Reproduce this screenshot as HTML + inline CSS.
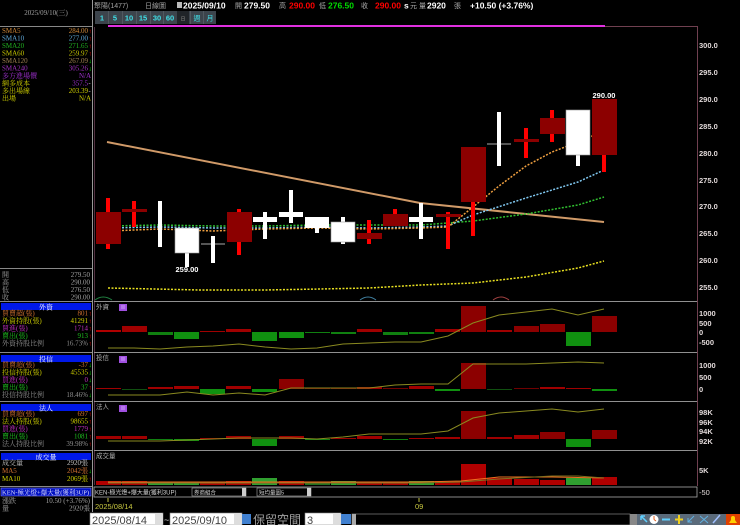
<!DOCTYPE html>
<html><head><meta charset="utf-8"><style>
html,body{margin:0;padding:0;background:#000;width:740px;height:525px;overflow:hidden}
svg{display:block}
text{font-family:"Liberation Sans","Noto Sans CJK TC",sans-serif}
.lp text{font-family:"Liberation Serif","Noto Serif CJK SC",serif}
</style></head><body>
<svg width="740" height="525" viewBox="0 0 740 525" xmlns="http://www.w3.org/2000/svg">
<rect width="740" height="525" fill="#000"/>
<!-- LEFT PANEL -->
<g font-size="7" class="lp">
<text x="46" y="15" fill="#a0a0a0" text-anchor="middle">2025/09/10(三)</text>
<line x1="0" y1="26.5" x2="92" y2="26.5" stroke="#888"/>
<g text-anchor="start">
<text x="2" y="33" fill="#d08838">SMA5</text>
<text x="2" y="40.5" fill="#60a8d8">SMA10</text>
<text x="2" y="48" fill="#20b020">SMA20</text>
<text x="2" y="55.5" fill="#c8c800">SMA60</text>
<text x="2" y="63" fill="#a08050">SMA120</text>
<text x="2" y="70.5" fill="#a030c0">SMA240</text>
<text x="2" y="78" fill="#a030d0">多方進場價</text>
<text x="2" y="85.5" fill="#d0d000">網多成本</text>
<text x="2" y="93" fill="#d0d000">多出場線</text>
<text x="2" y="100.5" fill="#d0d000">出場</text>
</g>
<g text-anchor="end">
<text x="88" y="33" fill="#d08838">284.00</text>
<text x="88" y="40.5" fill="#60a8d8">277.00</text>
<text x="88" y="48" fill="#20b020">271.65</text>
<text x="88" y="55.5" fill="#c8c800">259.97</text>
<text x="88" y="63" fill="#a08050">267.09</text>
<text x="88" y="70.5" fill="#a030c0">305.26</text>
<text x="91" y="78" fill="#a030d0">N/A</text>
<text x="88" y="85.5" fill="#a030d0">357.5</text>
<text x="88" y="93" fill="#d0d000">203.39</text>
<text x="91" y="100.5" fill="#d0d000">N/A</text>
</g>
<g font-size="6.5">
<text x="88.5" y="33" fill="#f00">↑</text><text x="88.5" y="40.5" fill="#f00">↑</text><text x="88.5" y="48" fill="#f00">↑</text><text x="88.5" y="55.5" fill="#f00">↑</text><text x="88.5" y="63" fill="#0f0">↓</text><text x="88.5" y="70.5" fill="#0f0">↓</text><text x="88.5" y="85.5" fill="#ddd">-</text><text x="88.5" y="93" fill="#ddd">-</text>
</g>
<line x1="0" y1="268.5" x2="92" y2="268.5" stroke="#888"/>
<text x="2" y="277" fill="#a0a0a0">開</text><text x="90" y="277" fill="#a0a0a0" text-anchor="end">279.50</text>
<text x="2" y="284.5" fill="#a0a0a0">高</text><text x="90" y="284.5" fill="#a0a0a0" text-anchor="end">290.00</text>
<text x="2" y="292" fill="#a0a0a0">低</text><text x="90" y="292" fill="#a0a0a0" text-anchor="end">276.50</text>
<text x="2" y="299.5" fill="#a0a0a0">收</text><text x="90" y="299.5" fill="#a0a0a0" text-anchor="end">290.00</text>
<line x1="0" y1="301.5" x2="92" y2="301.5" stroke="#888"/>
<rect x="1" y="303" width="90" height="7" fill="#0018e8"/>
<text x="46" y="309.5" fill="#fff" text-anchor="middle">外資</text>
<text x="2" y="315.5" fill="#d07030">買賣超(張)</text><text x="88" y="315.5" fill="#d07030" text-anchor="end">801</text>
<text x="2" y="323" fill="#d0d000">外資持股(張)</text><text x="88" y="323" fill="#d0d000" text-anchor="end">41291</text>
<text x="2" y="330.5" fill="#c030c0">買進(張)</text><text x="88" y="330.5" fill="#c030c0" text-anchor="end">1714</text>
<text x="2" y="338" fill="#20c020">賣出(張)</text><text x="88" y="338" fill="#20c020" text-anchor="end">913</text>
<text x="2" y="345.5" fill="#909090">外資持股比例</text><text x="88" y="345.5" fill="#909090" text-anchor="end">16.73%</text>
<g fill="#f00" font-size="6.5"><text x="88.5" y="315.5">↑</text><text x="88.5" y="323">↑</text><text x="88.5" y="330.5">↑</text><text x="88.5" y="338">↑</text><text x="88.5" y="345.5">↑</text></g>
<line x1="0" y1="352.5" x2="92" y2="352.5" stroke="#888"/>
<rect x="1" y="355" width="90" height="7" fill="#0018e8"/>
<text x="46" y="361.5" fill="#fff" text-anchor="middle">投信</text>
<text x="2" y="367" fill="#d07030">買賣超(張)</text><text x="88" y="367" fill="#d07030" text-anchor="end">-37</text>
<text x="2" y="374.5" fill="#d0d000">投信持股(張)</text><text x="88" y="374.5" fill="#d0d000" text-anchor="end">45535</text>
<text x="2" y="382" fill="#c030c0">買進(張)</text><text x="88" y="382" fill="#c030c0" text-anchor="end">0</text>
<text x="2" y="389.5" fill="#20c020">賣出(張)</text><text x="88" y="389.5" fill="#20c020" text-anchor="end">37</text>
<text x="2" y="397" fill="#909090">投信持股比例</text><text x="88" y="397" fill="#909090" text-anchor="end">18.46%</text>
<g font-size="6.5"><text x="88.5" y="367" fill="#0f0">↓</text><text x="88.5" y="374.5" fill="#0f0">↓</text><text x="88.5" y="382" fill="#0f0">↓</text><text x="88.5" y="389.5" fill="#f00">↑</text><text x="88.5" y="397" fill="#0f0">↓</text></g>
<line x1="0" y1="401.5" x2="92" y2="401.5" stroke="#888"/>
<rect x="1" y="404" width="90" height="7" fill="#0018e8"/>
<text x="46" y="410.5" fill="#fff" text-anchor="middle">法人</text>
<text x="2" y="416" fill="#d07030">買賣超(張)</text><text x="88" y="416" fill="#d07030" text-anchor="end">697</text>
<text x="2" y="423.5" fill="#d0d000">法人持股(張)</text><text x="88" y="423.5" fill="#d0d000" text-anchor="end">98655</text>
<text x="2" y="431" fill="#c030c0">買進(張)</text><text x="88" y="431" fill="#c030c0" text-anchor="end">1779</text>
<text x="2" y="438.5" fill="#20c020">賣出(張)</text><text x="88" y="438.5" fill="#20c020" text-anchor="end">1081</text>
<text x="2" y="446" fill="#909090">法人持股比例</text><text x="88" y="446" fill="#909090" text-anchor="end">39.98%</text>
<g fill="#f00" font-size="6.5"><text x="88.5" y="416">↑</text><text x="88.5" y="423.5">↑</text><text x="88.5" y="431">↑</text><text x="88.5" y="438.5">↑</text><text x="88.5" y="446">↑</text></g>
<line x1="0" y1="450.5" x2="92" y2="450.5" stroke="#888"/>
<rect x="1" y="453" width="90" height="7" fill="#0018e8"/>
<text x="46" y="459.5" fill="#fff" text-anchor="middle">成交量</text>
<text x="2" y="465" fill="#c0c0c0">成交量</text><text x="88" y="465" fill="#c0c0c0" text-anchor="end">2920張</text>
<text x="2" y="473" fill="#d07030">MA5</text><text x="88" y="473" fill="#d07030" text-anchor="end">2042張</text>
<text x="2" y="481" fill="#d0d000">MA10</text><text x="88" y="481" fill="#d0d000" text-anchor="end">2069張</text>
<g font-size="6.5"><text x="88.5" y="473" fill="#0f0">↓</text><text x="88.5" y="481" fill="#f00">↑</text></g>
<line x1="0" y1="486.5" x2="92" y2="486.5" stroke="#888"/>
<rect x="1" y="488" width="90" height="8" fill="#0010c0" stroke="#8080ff" stroke-width="0.6"/>
<text x="2" y="494.5" fill="#e0e0ff" font-size="6.5">KEN-極光燈+爆大量(獲利3UP)</text>
<text x="2" y="503" fill="#a0a0a0">漲跌</text><text x="90" y="503" fill="#a0a0a0" text-anchor="end">10.50 (+3.76%)</text>
<text x="2" y="510.5" fill="#a0a0a0">量</text><text x="90" y="510.5" fill="#a0a0a0" text-anchor="end">2920張</text>
</g>
<line x1="92.5" y1="0" x2="92.5" y2="512" stroke="#999"/>

<!-- TOP BAR -->
<g font-size="8.5">
<text x="94" y="8" fill="#a0a0a0" font-size="7">聚陽(1477)</text>
<text x="145" y="8" fill="#a0a0a0" font-size="7">日線圖</text>
<rect x="177" y="2" width="5" height="6" fill="#bbb"/>
<text x="183" y="8.5" fill="#fff" font-weight="bold">2025/09/10</text>
<text x="235" y="8" fill="#aaa" font-size="7">開</text>
<text x="244" y="8.5" fill="#fff" font-weight="bold">279.50</text>
<text x="279" y="8" fill="#aaa" font-size="7">高</text>
<text x="289" y="8.5" fill="#f00" font-weight="bold">290.00</text>
<text x="319" y="8" fill="#aaa" font-size="7">低</text>
<text x="328" y="8.5" fill="#0d0" font-weight="bold">276.50</text>
<text x="361" y="8" fill="#aaa" font-size="7">收</text>
<text x="375" y="8.5" fill="#f00" font-weight="bold">290.00</text>
<text x="404" y="8.5" fill="#fff" font-weight="bold">s</text>
<text x="410" y="8" fill="#aaa" font-size="7">元</text>
<text x="419" y="8" fill="#aaa" font-size="7">量</text>
<text x="427" y="8.5" fill="#fff" font-weight="bold">2920</text>
<text x="454" y="8" fill="#aaa" font-size="7">張</text>
<text x="470" y="8.5" fill="#fff" font-weight="bold">+10.50 (+3.76%)</text>
</g>
<g font-size="7.5" font-weight="bold" fill="#40e0e8" text-anchor="middle">
<rect x="95" y="11" width="121" height="13" fill="#3c444c"/>
<rect x="177" y="11" width="12" height="13" fill="#202428"/>
<g stroke="#606870" stroke-width="0.6"><line x1="108.5" y1="11" x2="108.5" y2="24"/><line x1="122.5" y1="11" x2="122.5" y2="24"/><line x1="136.5" y1="11" x2="136.5" y2="24"/><line x1="150.5" y1="11" x2="150.5" y2="24"/><line x1="163.5" y1="11" x2="163.5" y2="24"/><line x1="190.5" y1="11" x2="190.5" y2="24"/><line x1="203.5" y1="11" x2="203.5" y2="24"/></g>
<text x="102" y="20.5">1</text><text x="115" y="20.5">5</text><text x="129" y="20.5">10</text><text x="143" y="20.5">15</text><text x="157" y="20.5">30</text><text x="170" y="20.5">60</text>
<text x="183" y="20.5" fill="#666" font-size="5">日</text><text x="197" y="20.5" font-weight="normal" font-size="7">週</text><text x="210" y="20.5" font-weight="normal" font-size="7">月</text>
</g>
<rect x="108" y="25" width="497" height="2" fill="#e030e0"/>
<line x1="605" y1="26.5" x2="697" y2="26.5" stroke="#704050"/>
<line x1="697.5" y1="26" x2="697.5" y2="301" stroke="#704050"/>
<line x1="94.5" y1="27" x2="94.5" y2="485" stroke="#503040"/>

<g font-size="7.5" fill="#e0d8d8" font-weight="bold">
<text x="699" y="48">300.0</text><text x="699" y="75">295.0</text><text x="699" y="102">290.0</text><text x="699" y="129">285.0</text><text x="699" y="156">280.0</text><text x="699" y="183">275.0</text><text x="699" y="209">270.0</text><text x="699" y="236">265.0</text><text x="699" y="263">260.0</text><text x="699" y="290">255.0</text>
<text x="699" y="316">1000</text><text x="699" y="326">500</text><text x="699" y="335">0</text><text x="699" y="345">-500</text>
<text x="699" y="368">1000</text><text x="699" y="380">500</text><text x="699" y="392">0</text>
<text x="699" y="415">98K</text><text x="699" y="425">96K</text><text x="699" y="434">94K</text><text x="699" y="444">92K</text>
<text x="699" y="473">5K</text>
<text x="699" y="495" font-weight="normal">-50</text>
</g>

<polyline points="107,142 420,203 604,222" fill="none" stroke="#d09a68" stroke-width="2"/>
<g fill="none" stroke-width="1.5" stroke-dasharray="2,1.5">
<polyline stroke="#e8e020" points="108,288 200,290 265,290 320,289 369,288 421,285 473,283 526,277 578,268 604,261"/>
<polyline stroke="#30c030" points="108,226 160,225 213,226 265,226 317,225 369,225 421,225 448,223 473,221 526,214 578,205 604,197"/>
<polyline stroke="#80c8f0" points="108,228 160,227 213,228 265,228 317,227 369,228 421,227 448,226 473,215 526,198 578,182 604,170"/>
<polyline stroke="#f0a040" points="108,231 160,229 213,231 265,229 317,228 369,229 421,228 448,227 473,207 499,186 526,166 552,152 578,142 604,131"/>
</g>

<g>
<g fill="#ff0000">
<rect x="106" y="198" width="4" height="51"/><rect x="132" y="201" width="4" height="26"/><rect x="237" y="209" width="4" height="46"/><rect x="367" y="220" width="4" height="24"/><rect x="393" y="209" width="4" height="17"/><rect x="446" y="212" width="4" height="37"/><rect x="471" y="147" width="4" height="89"/><rect x="524" y="128" width="4" height="30"/><rect x="550" y="110" width="4" height="32"/><rect x="602" y="99" width="4" height="73"/>
</g>
<g fill="#8c0000">
<rect x="96" y="212" width="25" height="32"/><rect x="122" y="209" width="25" height="3"/><rect x="227" y="212" width="25" height="30"/><rect x="357" y="233" width="25" height="6"/><rect x="383" y="214" width="25" height="12"/><rect x="436" y="214" width="25" height="3"/><rect x="461" y="147" width="25" height="55"/><rect x="514" y="139" width="25" height="3"/><rect x="540" y="118" width="25" height="16"/><rect x="592" y="99" width="25" height="56"/>
</g>
<g fill="#ffffff">
<rect x="158" y="201" width="4" height="46"/>
<rect x="185" y="228" width="4" height="39"/><rect x="175" y="228" width="24" height="25" stroke="#999" stroke-width="0.6"/>
<rect x="201" y="243.5" width="24" height="1" fill="#aaa"/><rect x="211" y="236" width="4" height="27"/>
<rect x="263" y="212" width="4" height="27"/><rect x="253" y="217" width="24" height="5"/>
<rect x="289" y="190" width="4" height="33"/><rect x="279" y="212" width="24" height="5"/>
<rect x="315" y="217" width="4" height="16"/><rect x="305" y="217" width="24" height="11"/>
<rect x="341" y="217" width="4" height="27"/><rect x="331" y="222" width="24" height="20" stroke="#999" stroke-width="0.6"/>
<rect x="419" y="203" width="4" height="36"/><rect x="409" y="217" width="24" height="5"/>
<rect x="487" y="143.5" width="24" height="1" fill="#aaa"/><rect x="497" y="112" width="4" height="54"/>
<rect x="576" y="110" width="4" height="56"/><rect x="566" y="110" width="24" height="45" stroke="#999" stroke-width="0.6"/>
</g>
</g>
<g font-size="7.5" fill="#fff" text-anchor="middle" font-weight="bold">
<text x="187" y="272">259.00</text><text x="604" y="98">290.00</text>
</g>
<g fill="none" stroke-width="1"><path d="M95,300 Q103,294 112,300" stroke="#208040"/><path d="M360,300 Q368,294 376,300" stroke="#4080a0"/><path d="M493,300 Q501,294 509,300" stroke="#a04040"/></g>

<g stroke="#909090" stroke-width="1">
<line x1="94" y1="301.5" x2="697" y2="301.5"/><line x1="94" y1="352.5" x2="697" y2="352.5"/><line x1="94" y1="401.5" x2="697" y2="401.5"/><line x1="94" y1="450.5" x2="697" y2="450.5"/>
</g>
<line x1="697.5" y1="301" x2="697.5" y2="486" stroke="#704050"/>
<g font-size="6.5" fill="#b0b0b0">
<text x="96" y="309">外資</text><text x="96" y="360">投信</text><text x="96" y="409">法人</text><text x="96" y="458">成交量</text>
</g>
<g fill="#a050e0"><rect x="119" y="304" width="8" height="7"/><rect x="119" y="356" width="8" height="7"/><rect x="119" y="405" width="8" height="7"/></g>
<g stroke="#e0c0ff" stroke-width="0.7"><line x1="121" y1="306" x2="125" y2="306"/><line x1="121" y1="308" x2="125" y2="308"/><line x1="121" y1="358" x2="125" y2="358"/><line x1="121" y1="360" x2="125" y2="360"/><line x1="121" y1="407" x2="125" y2="407"/><line x1="121" y1="409" x2="125" y2="409"/></g>

<g>
<rect x="96" y="330" width="25" height="2" fill="#b00000"/><rect x="122" y="326" width="25" height="6" fill="#a00000"/><rect x="148" y="332" width="25" height="3" fill="#108010"/><rect x="174" y="332" width="25" height="7" fill="#109010"/><rect x="200" y="331" width="25" height="1" fill="#a00000"/><rect x="226" y="329" width="25" height="3" fill="#a00000"/><rect x="252" y="332" width="25" height="9" fill="#109010"/><rect x="279" y="332" width="25" height="6" fill="#109010"/><rect x="305" y="332" width="25" height="1" fill="#108010"/><rect x="331" y="332" width="25" height="2" fill="#108010"/><rect x="357" y="329" width="25" height="3" fill="#a00000"/><rect x="383" y="332" width="25" height="3" fill="#108010"/><rect x="409" y="332" width="25" height="2" fill="#108010"/><rect x="435" y="329" width="25" height="3" fill="#a00000"/><rect x="461" y="306" width="25" height="26" fill="#8c0000"/><rect x="487" y="330" width="25" height="2" fill="#a00000"/><rect x="514" y="326" width="25" height="6" fill="#8c0000"/><rect x="540" y="324" width="25" height="8" fill="#8c0000"/><rect x="566" y="332" width="25" height="14" fill="#109010"/><rect x="592" y="316" width="25" height="16" fill="#8c0000"/>
</g>
<polyline fill="none" stroke="#8a8a20" stroke-width="1" points="108,348 134,348 160,349 187,347 213,346 239,344 265,347 291,349 317,348 343,344 369,343 395,342 421,342 448,336 473,323 499,315 526,312 552,309 578,315 604,309"/>
<g>
<rect x="96" y="388" width="25" height="1" fill="#a00000"/><rect x="122" y="389" width="25" height="1" fill="#105010"/><rect x="148" y="387" width="25" height="2" fill="#a00000"/><rect x="174" y="386" width="25" height="3" fill="#a00000"/><rect x="200" y="389" width="25" height="5" fill="#109010"/><rect x="226" y="386" width="25" height="3" fill="#a00000"/><rect x="252" y="389" width="25" height="3" fill="#109010"/><rect x="279" y="379" width="25" height="10" fill="#8c0000"/><rect x="305" y="388" width="25" height="1" fill="#700000"/><rect x="331" y="388" width="25" height="1" fill="#700000"/><rect x="357" y="387" width="25" height="2" fill="#a00000"/><rect x="383" y="388" width="25" height="1" fill="#700000"/><rect x="409" y="386" width="25" height="3" fill="#a00000"/><rect x="435" y="389" width="25" height="2" fill="#109010"/><rect x="461" y="363" width="25" height="26" fill="#8c0000"/><rect x="487" y="389" width="25" height="1" fill="#105010"/><rect x="514" y="388" width="25" height="1" fill="#700000"/><rect x="540" y="387" width="25" height="2" fill="#a00000"/><rect x="566" y="388" width="25" height="1" fill="#a00000"/><rect x="592" y="389" width="25" height="2" fill="#109010"/>
</g>
<polyline fill="none" stroke="#8a8a20" stroke-width="1" points="108,395 134,395 160,395 187,392 213,395 239,393 265,395 291,388 317,388 343,388 369,388 395,385 421,384 448,384 473,364 499,364 526,364 552,363 578,362 604,363"/>
<g>
<rect x="96" y="436" width="25" height="3" fill="#a00000"/><rect x="122" y="436" width="25" height="3" fill="#a00000"/><rect x="148" y="439" width="25" height="1" fill="#108010"/><rect x="174" y="439" width="25" height="2" fill="#109010"/><rect x="200" y="438" width="25" height="1" fill="#a00000"/><rect x="226" y="436" width="25" height="3" fill="#a00000"/><rect x="252" y="439" width="25" height="7" fill="#109010"/><rect x="279" y="436" width="25" height="3" fill="#a00000"/><rect x="305" y="439" width="25" height="1" fill="#108010"/><rect x="331" y="438" width="25" height="1" fill="#a00000"/><rect x="357" y="436" width="25" height="3" fill="#a00000"/><rect x="383" y="439" width="25" height="1" fill="#108010"/><rect x="409" y="438" width="25" height="1" fill="#a00000"/><rect x="435" y="437" width="25" height="2" fill="#a00000"/><rect x="461" y="411" width="25" height="28" fill="#8c0000"/><rect x="487" y="437" width="25" height="2" fill="#a00000"/><rect x="514" y="435" width="25" height="4" fill="#a00000"/><rect x="540" y="432" width="25" height="7" fill="#8c0000"/><rect x="566" y="439" width="25" height="8" fill="#109010"/><rect x="592" y="430" width="25" height="9" fill="#8c0000"/>
</g>
<polyline fill="none" stroke="#8a8a20" stroke-width="1" points="108,441 134,441 160,441 187,440 213,439 239,438 265,438 291,438 317,439 343,437 369,434 395,434 421,434 448,431 473,418 499,413 526,411 552,409 578,412 604,409"/>
<g>
<rect x="96" y="481" width="25" height="4" fill="#b00000"/><rect x="122" y="481" width="25" height="4" fill="#b00000"/><rect x="148" y="482" width="25" height="3" fill="#30a030"/><rect x="174" y="482" width="25" height="3" fill="#30a030"/><rect x="200" y="482" width="25" height="3" fill="#b00000"/><rect x="226" y="481" width="25" height="4" fill="#b00000"/><rect x="252" y="478" width="25" height="7" fill="#30a030"/><rect x="279" y="481" width="25" height="4" fill="#b00000"/><rect x="305" y="483" width="25" height="2" fill="#207020"/><rect x="331" y="481" width="25" height="4" fill="#30a030"/><rect x="357" y="482" width="25" height="3" fill="#b00000"/><rect x="383" y="482" width="25" height="3" fill="#b00000"/><rect x="409" y="481" width="25" height="4" fill="#30a030"/><rect x="435" y="481" width="25" height="4" fill="#b00000"/><rect x="461" y="464" width="25" height="21" fill="#b00000"/><rect x="487" y="478" width="25" height="7" fill="#b00000"/><rect x="514" y="479" width="25" height="6" fill="#b00000"/><rect x="540" y="480" width="25" height="5" fill="#b00000"/><rect x="566" y="478" width="25" height="7" fill="#30a030"/><rect x="592" y="477" width="25" height="8" fill="#b00000"/>
</g>
<polyline fill="none" stroke="#f07020" stroke-width="1" points="108,482 265,482 421,482 461,481 499,477 552,477 604,478"/>
<polyline fill="none" stroke="#807020" stroke-width="1" points="108,483 265,483 421,483 461,482 499,479 552,476 578,476 604,478"/>

<rect x="94" y="487" width="603" height="10" fill="#000" stroke="#aaa" stroke-width="0.8"/>
<text x="95" y="494.5" fill="#d0d0d0" font-size="6">KEN-極光燈+爆大量(獲利3UP)</text>
<rect x="192" y="488" width="54" height="8" fill="#000" stroke="#aaa" stroke-width="0.6"/><text x="194" y="494.5" fill="#d0d0d0" font-size="5.5">券商組合</text><rect x="242" y="488" width="4" height="8" fill="#ccc"/>
<rect x="257" y="488" width="54" height="8" fill="#000" stroke="#aaa" stroke-width="0.6"/><text x="259" y="494.5" fill="#d0d0d0" font-size="5.5">短均量圖5</text><rect x="307" y="488" width="4" height="8" fill="#ccc"/>
<line x1="108" y1="498" x2="108" y2="502" stroke="#c0c040"/><line x1="419" y1="498" x2="419" y2="502" stroke="#c0c040"/>
<text x="95" y="509" fill="#c8c840" font-size="7.5">2025/08/14</text>
<text x="415" y="509" fill="#c8c840" font-size="7.5">09</text>

<rect x="90" y="513" width="73" height="12" fill="#fff" stroke="#888" stroke-width="0.6"/>
<text x="92" y="524" fill="#444" font-size="11" font-family="Liberation Serif">2025/08/14</text>
<rect x="155" y="514" width="7" height="10" fill="#ddd"/>
<text x="164" y="523" fill="#ccc" font-size="9">~</text>
<rect x="170" y="513" width="72" height="12" fill="#fff" stroke="#888" stroke-width="0.6"/>
<text x="172" y="524" fill="#444" font-size="11" font-family="Liberation Serif">2025/09/10</text>
<rect x="234" y="514" width="7" height="10" fill="#ddd"/>
<rect x="242" y="514" width="9" height="10" fill="#4080d0"/>
<text x="253" y="524" fill="#a0a0a0" font-size="12">保留空間</text>
<rect x="305" y="513" width="36" height="12" fill="#fff" stroke="#888" stroke-width="0.6"/>
<text x="307" y="524" fill="#444" font-size="11" font-family="Liberation Serif">3</text>
<rect x="333" y="514" width="7" height="10" fill="#ddd"/>
<rect x="341" y="514" width="10" height="10" fill="#4080d0"/>
<rect x="352" y="514" width="278" height="11" fill="#000" stroke="#999" stroke-width="0.6"/>
<rect x="352" y="514" width="4" height="11" fill="#aaa"/>
<rect x="630" y="514" width="7" height="11" fill="#888"/>
<g>
<rect x="637" y="514" width="103" height="11" fill="#5a6a7a"/>
<path d="M641,516 L647,522 M641,516 L645,516 M641,516 L641,520" stroke="#60d0ff" stroke-width="1.5" fill="none"/>
<circle cx="654" cy="519.5" r="4.5" fill="#fff"/><path d="M654,519.5 L654,516 M654,519.5 L656,521" stroke="#e06020"/>
<rect x="662" y="518.5" width="8" height="2" fill="#60d0ff"/>
<path d="M679,515 V524 M675,519.5 H683" stroke="#f0d020" stroke-width="2"/>
<path d="M688,522 L694,516 M688,518 V522 H692" stroke="#60b0e0" fill="none"/>
<path d="M700,516 L708,523 M708,516 L700,523" stroke="#60b0e0"/>
<path d="M713,523 L720,515" stroke="#a0c0ff" stroke-width="1.5"/>
<rect x="726" y="514" width="14" height="11" fill="#e04000"/>
<path d="M729,523 H737 L735,520 V518 A2,2 0 0 0 731,518 V520 Z" fill="#ffd000"/>
</g>
</svg>
</body></html>
